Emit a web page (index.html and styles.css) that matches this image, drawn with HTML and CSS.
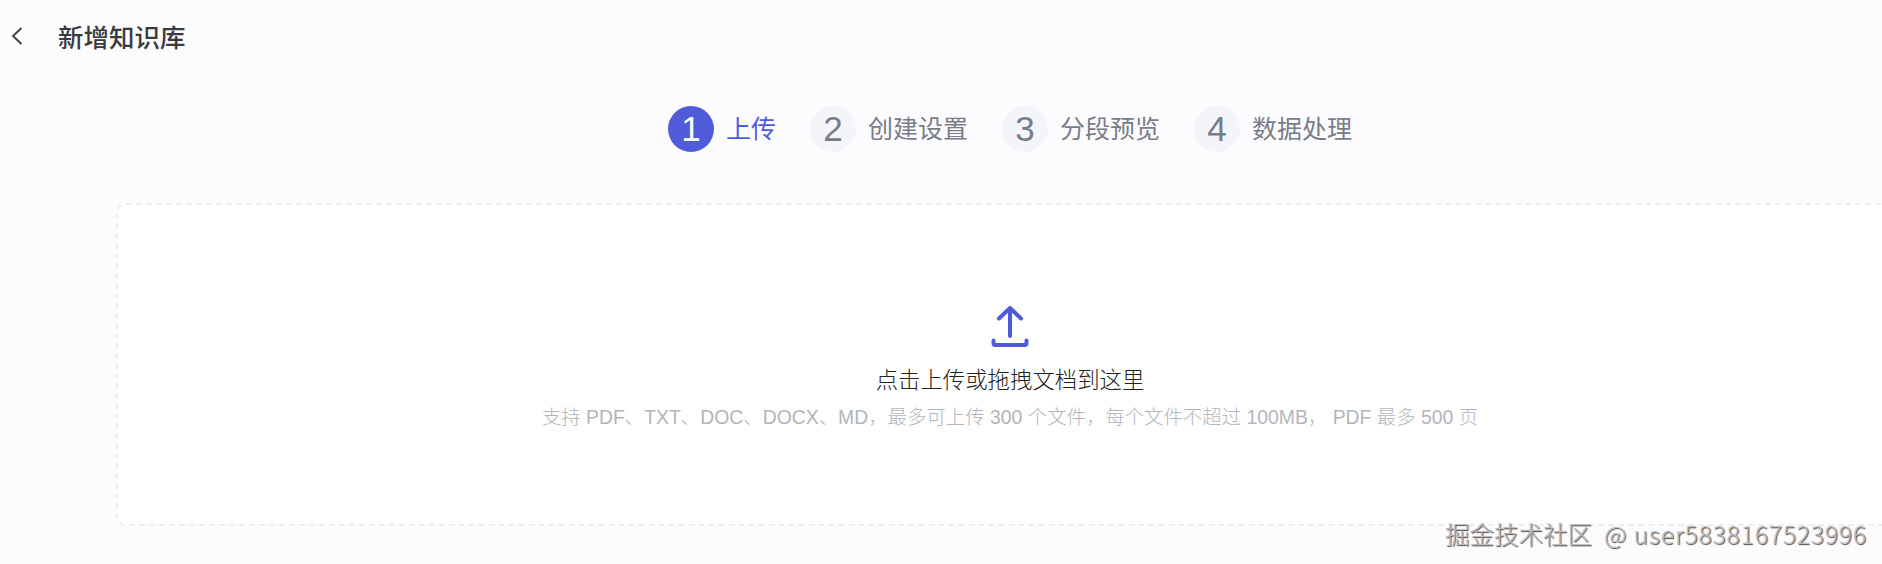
FILE: index.html
```html
<!DOCTYPE html>
<html lang="zh">
<head>
    <meta charset="UTF-8">
    <title>新增知识库</title>
    <link rel="stylesheet" href="styles.css">
</head>
<body>
    <header class="top-bar">
        <svg class="back-icon" width="14" height="18" viewBox="0 0 14 18">
            <path d="M11.5 1 L3 9 L11.5 17" fill="none" stroke="#3a3a40" stroke-width="1.8"/>
        </svg>
        <h1 class="page-title">新增知识库</h1>
    </header>

    <main class="content">
        <div class="steps">
            <div class="step active">
                <span class="step-num">1</span>
                <span class="step-label">上传</span>
            </div>
            <div class="step">
                <span class="step-num">2</span>
                <span class="step-label">创建设置</span>
            </div>
            <div class="step">
                <span class="step-num">3</span>
                <span class="step-label">分段预览</span>
            </div>
            <div class="step">
                <span class="step-num">4</span>
                <span class="step-label">数据处理</span>
            </div>
        </div>

        <div class="upload-box">
            <svg class="upload-icon" width="38" height="42" viewBox="0 0 38 42">
                <path d="M19 31 V3 M8 13.5 L19 3 L30 13.5" fill="none" stroke="#4f5bd9" stroke-width="4" stroke-linecap="round" stroke-linejoin="round"/>
                <path d="M2.5 35.5 V38 Q2.5 40 4.5 40 H33.5 Q35.5 40 35.5 38 V35.5" fill="none" stroke="#4f5bd9" stroke-width="4" stroke-linecap="round"/>
            </svg>
            <p class="upload-title">点击上传或拖拽文档到这里</p>
            <p class="upload-hint">支持 PDF、TXT、DOC、DOCX、MD，最多可上传 300 个文件，每个文件不超过 100MB， PDF 最多 500 页</p>
        </div>
    </main>

    <div class="watermark">掘金技术社区<span class="watermark-user">@ user5838167523996</span></div>
</body>
</html>
```

FILE: styles.css
```css
html, body {
    height: 100%;
    overflow: hidden;
}

body {
    margin: 0;
    background-color: #fcfcff;
    font-family: "Liberation Sans", "Noto Sans CJK SC", sans-serif;
    color: #333;
    position: relative;
}

.top-bar {
    display: flex;
    align-items: center;
    height: 71px;
    padding-left: 10px;
}

.back-icon {
    margin-right: 34px;
}

.page-title {
    margin: 0;
    font-size: 25.5px;
    font-weight: 500;
    color: #3a3a40;
}

.content {
    width: 1788px;
    margin-left: 116px;
}

.steps {
    display: flex;
    justify-content: center;
    gap: 34px;
    margin-top: 35px;
}

.step {
    display: flex;
    align-items: center;
    gap: 12px;
    color: #797c89;
}

.step-num {
    display: flex;
    align-items: center;
    justify-content: center;
    width: 46px;
    height: 46px;
    border-radius: 50%;
    background-color: #f4f5f9;
    font-size: 35px;
    line-height: 46px;
}

.step-label {
    font-size: 25px;
    line-height: 38px;
    margin-top: -1px;
}

.step.active {
    color: #4f5bd9;
}

.step.active .step-num {
    background-color: #4f5bd9;
    color: #fff;
}

.upload-box {
    display: flex;
    flex-direction: column;
    align-items: center;
    box-sizing: border-box;
    height: 323px;
    margin-top: 51px;
    padding-top: 100px;
    background-color: #fff;
    border: 2px dashed #eceef2;
    border-radius: 10px;
}

.upload-icon {
    display: block;
}

.upload-title {
    margin: 18px 0 0;
    font-size: 22.4px;
    line-height: 32px;
    font-weight: 300;
    color: #222;
}

.upload-hint {
    margin: 6px 0 0;
    font-size: 19.4px;
    line-height: 28px;
    font-weight: 300;
    color: #b4b5bc;
}

.watermark {
    position: absolute;
    left: 1445px;
    top: 516px;
    font-family: "Noto Sans CJK SC", sans-serif;
    font-size: 24.5px;
    font-weight: 300;
    line-height: 36px;
    white-space: nowrap;
    color: #bdbdbd;
    text-shadow: 1px 1px 1px #444;
}

.watermark-user {
    margin-left: 12px;
    letter-spacing: 0.9px;
}
```
